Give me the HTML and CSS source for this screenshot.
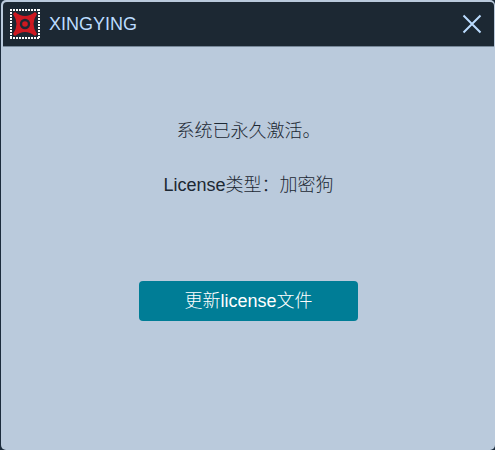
FILE: index.html
```html
<!DOCTYPE html>
<html lang="zh-CN">
<head>
<meta charset="utf-8">
<title>XINGYING</title>
<link rel="stylesheet" href="styles.css">
</head>
<body>
<main class="dialog">
  <header class="titlebar">
    <span class="logo">
      <svg viewBox="0 0 30 30" aria-hidden="true">
        <path d="M0 1H30M0 29H30M1 0V30M29 0V30" fill="none" stroke="#fff" stroke-width="2" stroke-dasharray="2 1" shape-rendering="crispEdges"/>
        <path fill="#ce1921" d="M5 3 Q15 11 25 3 L27 5 Q20 15 27 25 L25 27 Q15 19 5 27 L3 25 Q10 15 3 5Z"/>
        <circle cx="15" cy="15" r="4" fill="none" stroke="#1c2833" stroke-width="2.4"/>
      </svg>
    </span>
    <h1 class="title">XINGYING</h1>
    <button class="close" type="button" aria-label="关闭">
      <svg viewBox="0 0 20 20" aria-hidden="true"><path d="M1.5 1.5 18.5 18.5M18.5 1.5 1.5 18.5" fill="none" stroke="#bbdcff" stroke-width="2"/></svg>
    </button>
  </header>
  <section class="content">
    <p class="line">系统已永久激活。</p>
    <p class="line">License类型：加密狗</p>
    <button class="update" type="button">更新license文件</button>
  </section>
</main>
</body>
</html>
```
FILE: styles.css
```css
* { box-sizing: border-box; }

body {
  margin: 0;
  background: #1c2c3c;
  font: 18px/26px "Liberation Sans", "Noto Sans CJK SC", sans-serif;
  color: #1c2833;
}

.dialog {
  min-height: 100vh;
  margin-left: 1px;
  padding: 2px 1px 0 2px;
  border-radius: 5px;
  background: #bacadc;
}

.titlebar {
  display: flex;
  align-items: center;
  height: 45px;
  padding: 0 12px 0 7px;
  border-bottom: 1px solid #778899;
  border-radius: 4px 4px 0 0;
  background: #1c2833;
}

.logo {
  display: flex;
}

.logo svg {
  width: 30px;
  height: 30px;
}

.title {
  flex: 1;
  margin: 0 0 0 9px;
  font-size: 18px;
  font-weight: 400;
  color: #bbdcff;
}

.close {
  display: flex;
  padding: 0;
  border: 0;
  background: none;
  cursor: pointer;
}

.close svg {
  width: 20px;
  height: 20px;
}

.content {
  display: flex;
  flex-direction: column;
  align-items: center;
  gap: 28px;
  padding: 71px 16px 32px;
}

.line {
  margin: 0;
  font-weight: 300;
  text-align: center;
}

.update {
  width: 219px;
  height: 40px;
  margin-top: 55px;
  padding: 0;
  border: 0;
  border-radius: 4px;
  background: #007d96;
  color: #fff;
  font: inherit;
  font-weight: 300;
  cursor: pointer;
}
```
